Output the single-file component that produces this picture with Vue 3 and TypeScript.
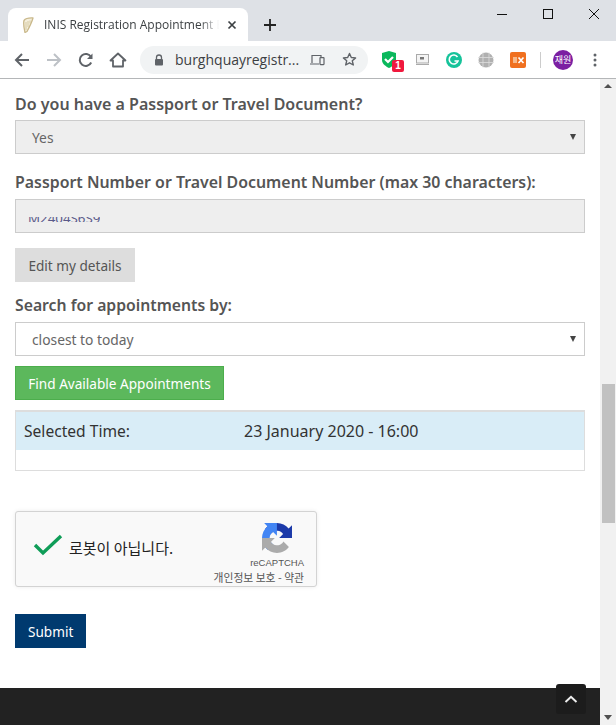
<script setup lang="ts">
const title = 'INIS Registration Appointment Booking'
</script>

<template>
  <div class="screen">
    <header class="tabstrip">
      <div class="tab">
        <svg class="favicon" width="12" height="16" viewBox="0 0 12 16">
          <path d="M3 15.500C2 11 1 7 2 3.500 3.500 1.500 7 .8 11 1 10 4.500 8 9 5 14.500Z" fill="#f4eedb" stroke="#c9b88a" stroke-width="1.300" stroke-linejoin="round" />
          <path d="M4 5v8M6 4v6M8 3.500v3" stroke="#d3c59c" stroke-width=".9" fill="none" />
        </svg>
        <span class="tab-title">{{ title }}</span>
        <svg class="tab-close" width="10" height="10" viewBox="0 0 10 10">
          <path d="M1.500 1.500l7 7M8.500 1.500l-7 7" stroke="#3c4043" stroke-width="1.700" />
        </svg>
      </div>
      <svg class="new-tab" width="14" height="14" viewBox="0 0 14 14">
        <path d="M7 1v12M1 7h12" stroke="#222" stroke-width="1.800" />
      </svg>
      <div class="win-controls">
        <svg width="10" height="10" viewBox="0 0 10 10"><path d="M0 5.500h10" stroke="#111" stroke-width="1" /></svg>
        <svg width="10" height="10" viewBox="0 0 10 10"><rect x=".5" y=".5" width="9" height="9" fill="none" stroke="#111" /></svg>
        <svg width="10" height="10" viewBox="0 0 10 10"><path d="M0 0l10 10M10 0L0 10" stroke="#111" /></svg>
      </div>
    </header>

    <nav class="toolbar">
      <svg class="nav" width="16" height="16" viewBox="0 0 16 16"><path d="M15 8H2M8 2L2 8l6 6" fill="none" stroke="#5f6368" stroke-width="2" /></svg>
      <svg class="nav" width="16" height="16" viewBox="0 0 16 16"><path d="M1 8h13M8 2l6 6-6 6" fill="none" stroke="#bdc1c6" stroke-width="2" /></svg>
      <svg class="nav" width="16" height="16" viewBox="0 0 16 16"><path d="M13.200 10.500A6 6 0 1 1 13 5" fill="none" stroke="#5f6368" stroke-width="2" /><path d="M14.500 1.500v5.500H9z" fill="#5f6368" /></svg>
      <svg class="nav" width="18" height="18" viewBox="0 0 18 18"><path d="M1.500 9.500L9 2.500l7.500 7H14v6H4v-6z" fill="none" stroke="#5f6368" stroke-width="1.800" stroke-linejoin="round" /></svg>
      <div class="omnibox">
        <svg width="10" height="12" viewBox="0 0 10 12"><path d="M2.500 5V3.500a2.500 2.500 0 0 1 5 0V5" fill="none" stroke="#5f6368" stroke-width="1.300" /><rect x="1" y="5" width="8" height="6.500" rx="1" fill="#5f6368" /></svg>
        <span class="url">burghquayregistr...</span>
        <svg class="device" width="16" height="12" viewBox="0 0 16 12"><path d="M3 9V1.500h9V3M1 10h9" fill="none" stroke="#5f6368" stroke-width="1.200" /><rect x="11" y="3.600" width="4" height="7" rx=".5" fill="none" stroke="#5f6368" stroke-width="1.200" /></svg>
        <svg class="star" width="15" height="15" viewBox="0 0 15 15"><path d="M7.500 1.500l1.800 4 4.300.4-3.300 2.900 1 4.200-3.800-2.200-3.800 2.200 1-4.200L1.400 5.900l4.300-.4z" fill="none" stroke="#5f6368" stroke-width="1.400" stroke-linejoin="round" /></svg>
      </div>
      <div class="extensions">
        <div class="ext shield">
          <svg width="16" height="17" viewBox="0 0 16 17"><path d="M1 2l7-2 7 2v7c0 4-4 6.500-7 8-3-1.500-7-4-7-8z" fill="#0ab85c" /><path d="M4 8l3 3 5-5" fill="none" stroke="#fff" stroke-width="2.200" /></svg>
          <span class="badge">1</span>
        </div>
        <svg class="ext" width="13" height="11" viewBox="0 0 13 11"><rect x=".5" y=".5" width="12" height="8.500" fill="#f4f4f4" stroke="#aaa" /><path d="M0 10.500h13" stroke="#aaa" /><rect x="4" y="3" width="4" height="2.500" fill="#777" /></svg>
        <svg class="ext grammarly" width="16" height="16" viewBox="0 0 16 16"><circle cx="8" cy="8" r="8" fill="#15c39a" /><path d="M11.500 5A4.500 4.500 0 1 0 12 9H8.500" fill="none" stroke="#fff" stroke-width="1.600" /></svg>
        <svg class="ext" width="16" height="16" viewBox="0 0 16 16"><circle cx="8" cy="8" r="7.500" fill="#b0b0b0" /><path d="M0 5.500h16M0 10.500h16M5 .5v15M11 .5v15" stroke="#ddd" stroke-width=".8" /></svg>
        <svg class="ext" width="16" height="16" viewBox="0 0 16 16"><rect width="16" height="16" rx="2" fill="#f0701f" /><rect x="3" y="5" width="4" height="6" fill="#f7b98a" /><path d="M8.500 5.500l5 5.500M13.500 5.500l-5 5.500" stroke="#fff" stroke-width="1.700" /></svg>
      </div>
      <span class="divider"></span>
      <span class="avatar">재원</span>
      <svg class="menu" width="4" height="14" viewBox="0 0 4 14"><circle cx="2" cy="2" r="1.500" fill="#5f6368" /><circle cx="2" cy="7" r="1.500" fill="#5f6368" /><circle cx="2" cy="12" r="1.500" fill="#5f6368" /></svg>
    </nav>

    <div class="viewport">
      <main class="page">
        <form class="form" @submit.prevent>
          <label class="label first">Do you have a Passport or Travel Document?</label>
          <div class="field disabled">
            <span>Yes</span>
            <i class="caret"></i>
          </div>

          <label class="label second">Passport Number or Travel Document Number (max 30 characters):</label>
          <div class="field disabled clipped">
            <div class="clip"><span>M2404S6S9</span></div>
          </div>

          <button class="btn edit" type="button">Edit my details</button>

          <label class="label third">Search for appointments by:</label>
          <div class="field">
            <span>closest to today</span>
            <i class="caret"></i>
          </div>

          <button class="btn find" type="button">Find Available Appointments</button>

          <div class="selected">
            <div class="selected-row">
              <span class="sel-key">Selected Time:</span>
              <span>23 January 2020 - 16:00</span>
            </div>
            <div class="selected-empty"></div>
          </div>

          <div class="captcha">
            <svg class="check" width="30" height="22" viewBox="0 0 30 22"><path d="M2 11l8 8L28 2" fill="none" stroke="#0f9d58" stroke-width="3.400" /></svg>
            <span class="captcha-text">로봇이 아닙니다.</span>
            <div class="captcha-brand">
              <svg width="30" height="30" viewBox="0 0 64 64">
                <path d="M64 31.955l-.033-1.370V4.687l-7.160 7.160C50.948 4.674 42.033.093 32.050.093c-10.400 0-19.622 4.960-25.458 12.640l11.736 11.860a15.550 15.550 0 0 1 4.754-5.334c2.050-1.600 4.952-2.906 8.968-2.906.485 0 .860.057 1.135.163 4.976.393 9.288 3.140 11.828 7.124l-8.307 8.307L64 31.953" fill="#1c3aa9" />
                <path d="M31.862.094l-1.370.033H4.594l7.160 7.160C4.580 13.147 0 22.060 0 32.046c0 10.400 4.960 19.622 12.640 25.458L24.500 45.768a15.550 15.550 0 0 1-5.334-4.754c-1.600-2.050-2.906-4.952-2.906-8.968 0-.485.057-.860.163-1.135.393-4.976 3.140-9.288 7.124-11.828l8.307 8.307L31.860.094" fill="#4285f4" />
                <path d="M.001 32.045l.033 1.370v25.898l7.160-7.160c5.860 7.173 14.774 11.754 24.760 11.754 10.400 0 19.622-4.960 25.458-12.640l-11.736-11.860a15.550 15.550 0 0 1-4.754 5.334c-2.050 1.600-4.952 2.906-8.968 2.906-.485 0-.860-.057-1.135-.163-4.976-.393-9.288-3.140-11.828-7.124l8.307-8.307L0 32.047" fill="#ababab" />
              </svg>
              <span class="brand-name">reCAPTCHA</span>
              <span class="brand-links">개인정보 보호 - 약관</span>
            </div>
          </div>

          <button class="btn submit" type="submit">Submit</button>
        </form>
        <footer class="footer">
          <a class="to-top" href="#" aria-label="Back to top">
            <svg width="14" height="8" viewBox="0 0 14 8"><path d="M1.500 7L7 1.800 12.500 7" fill="none" stroke="#eee" stroke-width="2" /></svg>
          </a>
        </footer>
      </main>
      <aside class="scrollbar">
        <i class="arrow up"></i>
        <div class="thumb"></div>
        <i class="arrow down"></i>
      </aside>
    </div>
  </div>
</template>

<style>
html, body { margin: 0; overflow: hidden; }
</style>

<style scoped>
.screen {
  width: 616px;
  height: 725px;
  display: flex;
  flex-direction: column;
  overflow: hidden;
  background: #fff;
  font-family: "Noto Sans", "Noto Sans CJK KR", sans-serif;
}
.tabstrip {
  height: 41px;
  flex: none;
  background: #dee1e6;
  display: flex;
  align-items: flex-end;
  padding-left: 8px;
  position: relative;
}
.tab {
  width: 240px;
  height: 33px;
  box-sizing: border-box;
  background: #fff;
  border-radius: 8px 8px 0 0;
  display: flex;
  align-items: center;
  padding: 0 11px 0 14px;
}
.favicon { flex: none; }
.tab-title {
  flex: 1;
  min-width: 0;
  margin: 0 6px 0 10px;
  font: 12px "Open Sans", "Noto Sans", sans-serif;
  color: #3c4043;
  white-space: nowrap;
  overflow: hidden;
  -webkit-mask-image: linear-gradient(90deg, #000 88%, transparent 99%);
  mask-image: linear-gradient(90deg, #000 88%, transparent 99%);
}
.new-tab { margin: 0 0 9px 15px; }
.win-controls {
  position: absolute;
  top: 9px;
  right: 17px;
  display: flex;
  gap: 36px;
  align-items: flex-start;
}
.toolbar {
  height: 38px;
  flex: none;
  box-sizing: border-box;
  background: #fff;
  border-bottom: 1px solid #b4b6b8;
  display: flex;
  align-items: center;
  padding: 0 0 0 14px;
}
.nav { flex: none; margin-right: 16px; }
.nav:nth-child(4) { margin-right: 13px; margin-left: -1px; }
.omnibox {
  width: 228px;
  height: 28px;
  box-sizing: border-box;
  background: #f1f3f4;
  border-radius: 14px;
  display: flex;
  align-items: center;
  padding: 0 11px 0 14px;
}
.url {
  margin-left: 11px;
  font: 14px "Open Sans", "Noto Sans", sans-serif;
  color: #3c4043;
  white-space: nowrap;
  flex: 1;
}
.device { margin-right: 17px; }
.extensions {
  display: flex;
  align-items: center;
  margin-left: 13px;
  gap: 16px;
}
.ext { flex: none; display: block; }
.grammarly { margin-left: 1px; }
.shield { position: relative; width: 16px; height: 17px; margin-right: 3px; }
.badge {
  position: absolute;
  left: 11px;
  top: 9px;
  width: 12px;
  height: 12px;
  border-radius: 2px;
  background: #f0183d;
  color: #fff;
  font: bold 10px/12px "Liberation Sans", sans-serif;
  text-align: center;
}
.divider { width: 1px; height: 16px; background: #ccc; margin: 0 12px 0 14px; }
.avatar {
  width: 20px;
  height: 20px;
  border-radius: 50%;
  background: #7b1fa2;
  color: #fff;
  font: 9px/20px "Noto Sans CJK KR", sans-serif;
  text-align: center;
  white-space: nowrap;
}
.menu { margin-left: 20px; }

.viewport { flex: 1; min-height: 0; display: flex; }
.page {
  flex: 1;
  min-width: 0;
  display: flex;
  flex-direction: column;
  position: relative;
}
.form {
  flex: 1;
  display: flex;
  flex-direction: column;
  align-items: flex-start;
  padding: 0 15px;
  box-sizing: border-box;
}
.label {
  font-size: 16px;
  line-height: 20px;
  font-weight: 600;
  color: #555;
  white-space: nowrap;
}
.first { margin-top: 15px; margin-bottom: 6px; }
.second { margin-top: 18px; margin-bottom: 7px; font-size: 15.880px; }
.third { margin-top: 13px; margin-bottom: 7px; font-size: 15.750px; }
.field {
  width: 100%;
  height: 34px;
  box-sizing: border-box;
  border: 1px solid #ccc;
  display: flex;
  align-items: center;
  justify-content: space-between;
  padding: 0 8px 0 16px;
  font-size: 13.8px;
  color: #666;
  background: #fff;
}
.disabled { background: #eee; }
.clipped { align-items: flex-start; padding: 17px 0 0 12px; }
.clip { height: 5px; overflow: hidden; }
.clip span { display: block; line-height: 20px; margin-top: -9px; font-size: 13.300px; color: #5a5a8a; }
.caret {
  width: 0;
  height: 0;
  border-left: 3px solid transparent;
  border-right: 3px solid transparent;
  border-top: 6px solid #444;
}
.btn {
  height: 34px;
  box-sizing: border-box;
  border: 1px solid transparent;
  padding: 2px 12px 0;
  font: 13.6px/20px "Noto Sans", sans-serif;
  cursor: pointer;
  white-space: nowrap;
}
.edit { margin-top: 15px; width: 120px; background: #ddd; color: #555; }
.find { margin-top: 10px; width: 209px; background: #5cb85c; border-color: #4cae4c; color: #fff; }
.selected {
  margin-top: 10px;
  width: 100%;
  height: 61px;
  box-sizing: border-box;
  border: 1px solid #ddd;
  border-top-width: 2px;
}
.selected-row {
  height: 38px;
  display: flex;
  align-items: center;
  background: #d9edf7;
  padding-left: 8px;
  font-size: 16px;
  color: #333;
}
.sel-key { width: 220px; flex: none; font-size: 15.6px; }
.captcha {
  margin-top: 40px;
  width: 302px;
  height: 76px;
  box-sizing: border-box;
  flex: none;
  border: 1px solid #d3d3d3;
  border-radius: 3px;
  background: #f9f9f9;
  box-shadow: 0 0 4px rgba(0, 0, 0, .08);
  display: flex;
  align-items: center;
  padding: 0 12px 0 17px;
}
.check { flex: none; margin-top: -8px; }
.captcha-text { margin: -4px 0 0 6px; font: 15px "Noto Sans CJK KR", sans-serif; color: #222; flex: 1; white-space: nowrap; }
.captcha-brand {
  display: flex;
  flex-direction: column;
  align-items: flex-end;
  align-self: flex-start;
  padding-top: 11px;
}
.captcha-brand svg { margin-right: 12px; }
.brand-name { font: 9.5px/12px "Liberation Sans", sans-serif; color: #555; margin-top: 4px; }
.brand-links { font: 10.800px/14px "Noto Sans CJK KR", sans-serif; color: #555; margin-top: 1px; white-space: nowrap; }
.submit { margin-top: 27px; width: 71px; background: #003a6f; color: #fff; }
.footer { height: 37px; flex: none; background: #222; }
.to-top {
  position: absolute;
  right: 14px;
  bottom: 11px;
  width: 30px;
  height: 30px;
  border-radius: 3px;
  background: #1c1c1c;
  display: flex;
  align-items: center;
  justify-content: center;
}
.scrollbar {
  width: 16px;
  flex: none;
  background: #f1f1f1;
  display: flex;
  flex-direction: column;
  align-items: center;
}
.arrow { width: 0; height: 0; border-left: 4px solid transparent; border-right: 4px solid transparent; }
.up { margin-top: 5px; border-bottom: 4px solid #505050; }
.thumb { width: 13px; height: 139px; margin-top: 296px; margin-left: 1px; background: #c1c1c1; }
.down { margin-top: auto; margin-bottom: 5px; border-top: 5px solid #505050; }
</style>
